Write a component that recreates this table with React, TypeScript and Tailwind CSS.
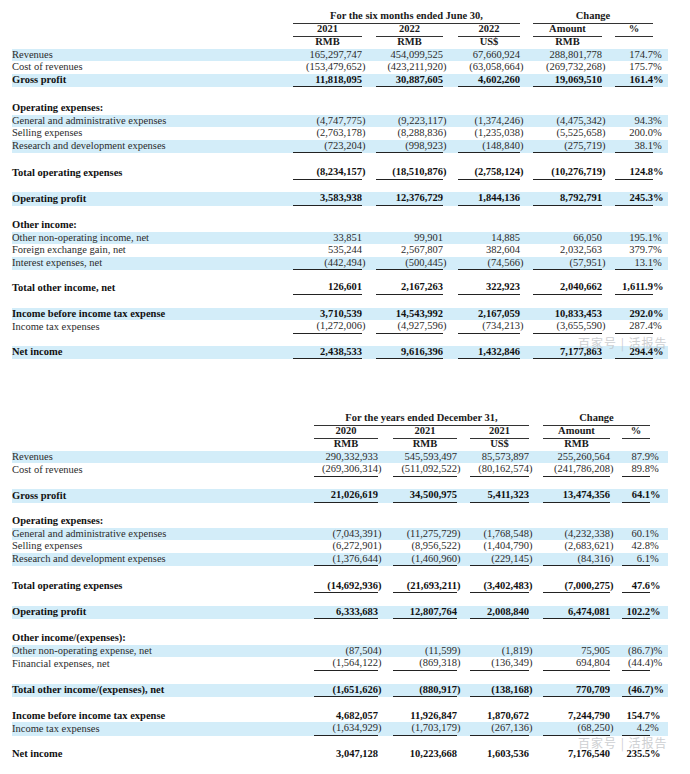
import React from 'react'

type Line = {
  label?: string
  vals?: string[]
  bold?: boolean
  blue?: boolean
  line?: boolean
  head?: boolean
  gap?: string
}

interface Layout {
  label: string
  cells: string[]
  title: string
  change: string
}

const topLayout: Layout = {
  label: 'w-[281px]',
  cells: ['w-[69px]', 'ml-[14px] w-[67px]', 'ml-[15px] w-[62px]', 'ml-[13px] w-[69px]', 'ml-[13px] w-[38px]'],
  title: 'w-[227px]',
  change: 'ml-[13px] w-[120px]',
}

const bottomLayout: Layout = {
  label: 'w-[302px]',
  cells: ['w-[64px]', 'ml-[15px] w-[64px]', 'ml-[13px] w-[59px]', 'ml-[14px] w-[67px]', 'ml-[12px] w-[28px]'],
  title: 'w-[215px]',
  change: 'ml-[14px] w-[107px]',
}

const topRows: Line[] = [
  { label: 'Revenues', blue: true, vals: ['165,297,747', '454,099,525', '67,660,924', '288,801,778', '174.7%'] },
  { label: 'Cost of revenues', vals: ['(153,479,652)', '(423,211,920)', '(63,058,664)', '(269,732,268)', '175.7%'] },
  { label: 'Gross profit', bold: true, blue: true, line: true, vals: ['11,818,095', '30,887,605', '4,602,260', '19,069,510', '161.4%'] },
  { gap: 'h-[15px]' },
  { label: 'Operating expenses:', head: true },
  { label: 'General and administrative expenses', blue: true, vals: ['(4,747,775)', '(9,223,117)', '(1,374,246)', '(4,475,342)', '94.3%'] },
  { label: 'Selling expenses', vals: ['(2,763,178)', '(8,288,836)', '(1,235,038)', '(5,525,658)', '200.0%'] },
  { label: 'Research and development expenses', blue: true, line: true, vals: ['(723,204)', '(998,923)', '(148,840)', '(275,719)', '38.1%'] },
  { gap: 'h-[13px]' },
  { label: 'Total operating expenses', bold: true, line: true, vals: ['(8,234,157)', '(18,510,876)', '(2,758,124)', '(10,276,719)', '124.8%'] },
  { gap: 'h-[12.5px]' },
  { label: 'Operating profit', bold: true, blue: true, line: true, vals: ['3,583,938', '12,376,729', '1,844,136', '8,792,791', '245.3%'] },
  { gap: 'h-[13.5px]' },
  { label: 'Other income:', head: true },
  { label: 'Other non-operating income, net', blue: true, vals: ['33,851', '99,901', '14,885', '66,050', '195.1%'] },
  { label: 'Foreign exchange gain, net', vals: ['535,244', '2,567,807', '382,604', '2,032,563', '379.7%'] },
  { label: 'Interest expenses, net', blue: true, line: true, vals: ['(442,494)', '(500,445)', '(74,566)', '(57,951)', '13.1%'] },
  { gap: 'h-[11px]' },
  { label: 'Total other income, net', bold: true, line: true, vals: ['126,601', '2,167,263', '322,923', '2,040,662', '1,611.9%'] },
  { gap: 'h-[13px]' },
  { label: 'Income before income tax expense', bold: true, blue: true, vals: ['3,710,539', '14,543,992', '2,167,059', '10,833,453', '292.0%'] },
  { label: 'Income tax expenses', line: true, vals: ['(1,272,006)', '(4,927,596)', '(734,213)', '(3,655,590)', '287.4%'] },
  { gap: 'h-[12px]' },
  { label: 'Net income', bold: true, blue: true, line: true, vals: ['2,438,533', '9,616,396', '1,432,846', '7,177,863', '294.4%'] },
]

const bottomRows: Line[] = [
  { label: 'Revenues', blue: true, vals: ['290,332,933', '545,593,497', '85,573,897', '255,260,564', '87.9%'] },
  { label: 'Cost of revenues', line: true, vals: ['(269,306,314)', '(511,092,522)', '(80,162,574)', '(241,786,208)', '89.8%'] },
  { gap: 'h-[12.5px]' },
  { label: 'Gross profit', bold: true, blue: true, line: true, vals: ['21,026,619', '34,500,975', '5,411,323', '13,474,356', '64.1%'] },
  { gap: 'h-[12.5px]' },
  { label: 'Operating expenses:', head: true },
  { label: 'General and administrative expenses', blue: true, vals: ['(7,043,391)', '(11,275,729)', '(1,768,548)', '(4,232,338)', '60.1%'] },
  { label: 'Selling expenses', vals: ['(6,272,901)', '(8,956,522)', '(1,404,790)', '(2,683,621)', '42.8%'] },
  { label: 'Research and development expenses', blue: true, line: true, vals: ['(1,376,644)', '(1,460,960)', '(229,145)', '(84,316)', '6.1%'] },
  { gap: 'h-[13.5px]' },
  { label: 'Total operating expenses', bold: true, line: true, vals: ['(14,692,936)', '(21,693,211)', '(3,402,483)', '(7,000,275)', '47.6%'] },
  { gap: 'h-[12.5px]' },
  { label: 'Operating profit', bold: true, blue: true, line: true, vals: ['6,333,683', '12,807,764', '2,008,840', '6,474,081', '102.2%'] },
  { gap: 'h-[13px]' },
  { label: 'Other income/(expenses):', head: true },
  { label: 'Other non-operating expense, net', blue: true, vals: ['(87,504)', '(11,599)', '(1,819)', '75,905', '(86.7)%'] },
  { label: 'Financial expenses, net', line: true, vals: ['(1,564,122)', '(869,318)', '(136,349)', '694,804', '(44.4)%'] },
  { gap: 'h-[13px]' },
  { label: 'Total other income/(expenses), net', bold: true, blue: true, line: true, vals: ['(1,651,626)', '(880,917)', '(138,168)', '770,709', '(46.7)%'] },
  { gap: 'h-[12.5px]' },
  { label: 'Income before income tax expense', bold: true, vals: ['4,682,057', '11,926,847', '1,870,672', '7,244,790', '154.7%'] },
  { label: 'Income tax expenses', blue: true, line: true, vals: ['(1,634,929)', '(1,703,179)', '(267,136)', '(68,250)', '4.2%'] },
  { gap: 'h-[12.5px]' },
  { label: 'Net income', bold: true, vals: ['3,047,128', '10,223,668', '1,603,536', '7,176,540', '235.5%'] },
]

// closing paren / percent sign hang past the column's right edge
const Num = ({ v, bold }: { v: string; bold?: boolean }) => {
  let core = v
  let tail = ''
  let cls = ''
  if (v.endsWith(')%')) {
    core = v.slice(0, -2)
    tail = ')%'
    cls = bold ? 'mr-[-1.333em]' : 'mr-[-1.166em]'
  } else if (v.endsWith('%')) {
    core = v.slice(0, -1)
    tail = '%'
    cls = bold ? 'mr-[-1em]' : 'mr-[-0.833em]'
  } else if (v.endsWith(')')) {
    core = v.slice(0, -1)
    tail = ')'
    cls = 'mr-[-0.333em]'
  }
  return (
    <span className="whitespace-nowrap">
      {core}
      {tail && <span className={cls}>{tail}</span>}
    </span>
  )
}

const Header = ({ layout, title, years, units }: { layout: Layout; title: string; years: string[]; units: string[] }) => (
  <div className="font-bold text-[#1a1a1a]">
    <div className="flex h-[14.5px]">
      <div className={layout.label} />
      <div className={`flex items-center justify-center border-b border-[#333] ${layout.title}`}>{title}</div>
      <div className={`flex items-center justify-center border-b border-[#333] ${layout.change}`}>Change</div>
    </div>
    <div className="flex h-[13px]">
      <div className={layout.label} />
      {years.map((y, i) => (
        <div key={i} className={`flex items-center justify-center border-b border-[#333] ${layout.cells[i]}`}>
          {y}
        </div>
      ))}
    </div>
    <div className="flex h-[12px]">
      <div className={layout.label} />
      {units.map((u, i) => (
        <div key={i} className={`flex items-center justify-center ${layout.cells[i]}`}>
          {u}
        </div>
      ))}
    </div>
  </div>
)

const Body = ({ layout, rows }: { layout: Layout; rows: Line[] }) => (
  <div>
    {rows.map((r, idx) => {
      if (r.gap) return <div key={idx} className={r.gap} />
      return (
        <div
          key={idx}
          className={`flex ${r.line ? 'h-[13.5px]' : 'h-[12.5px]'} ${r.blue ? 'bg-[#d3edf9]' : ''} ${
            r.bold || r.head ? 'font-bold text-[#111]' : 'text-[#2b2b2b]'
          }`}
        >
          <div className={`flex items-center whitespace-nowrap ${layout.label}`}>{r.label}</div>
          {r.vals?.map((v, i) => (
            <div
              key={i}
              className={`flex items-center justify-end ${r.line ? 'border-b border-[#222]' : ''} ${layout.cells[i]}`}
            >
              <Num v={v} bold={r.bold} />
            </div>
          ))}
        </div>
      )
    })}
  </div>
)

const Watermark = ({ pos }: { pos: string }) => (
  <div
    className={`absolute left-[578px] text-[12px] tracking-[1px] text-[#b9bcc0] opacity-70 font-['Noto_Sans_CJK_SC',sans-serif] ${pos}`}
  >
    百家号 | 活报告
  </div>
)

export default function App() {
  return (
    <div className="relative w-[690px] h-[774px] bg-white text-[10.5px] leading-none overflow-hidden font-['Liberation_Serif','Times_New_Roman',serif]">
      <div className="ml-[12px] w-[656px] pt-[9px]">
        <Header
          layout={topLayout}
          title="For the six months ended June 30,"
          years={['2021', '2022', '2022', 'Amount', '%']}
          units={['RMB', 'RMB', 'US$', 'RMB', '']}
        />
        <Body layout={topLayout} rows={topRows} />

        <div className="h-[52px]" />

        <Header
          layout={bottomLayout}
          title="For the years ended December 31,"
          years={['2020', '2021', '2021', 'Amount', '%']}
          units={['RMB', 'RMB', 'US$', 'RMB', '']}
        />
        <Body layout={bottomLayout} rows={bottomRows} />
      </div>
      <Watermark pos="top-[337px]" />
      <Watermark pos="top-[737px]" />
    </div>
  )
}
